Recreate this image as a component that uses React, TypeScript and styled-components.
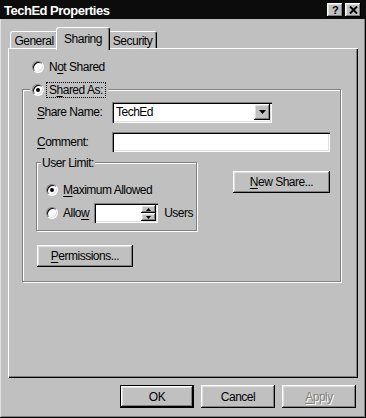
import React from 'react';
import styled, { createGlobalStyle, css } from 'styled-components';

const GlobalStyle = createGlobalStyle`
  html, body {
    margin: 0;
    padding: 0;
    background: #c0c0c0;
  }
  body {
    font-family: "Liberation Sans", Arial, sans-serif;
  }
`;

const face = '#c0c0c0';

const raised = css`
  box-shadow: inset -1px -1px 0 #000, inset 1px 1px 0 #fff,
    inset -2px -2px 0 #808080, inset 2px 2px 0 #dfdfdf;
`;

const sunken = css`
  box-shadow: inset 1px 1px 0 #808080, inset 2px 2px 0 #000,
    inset -1px -1px 0 #fff, inset -2px -2px 0 #dfdfdf;
`;

const etched = css`
  box-sizing: border-box;
  border: 1px solid #808080;
  box-shadow: 1px 1px 0 #fff, inset 1px 1px 0 #fff;
`;

const Window = styled.div`
  width: 366px;
  height: 418px;
  box-sizing: border-box;
  display: flex;
  flex-direction: column;
  background: ${face};
  color: #000;
  font-size: 12px;
  letter-spacing: -0.5px;
  box-shadow: inset -1px -1px 0 #000, inset 1px 0 0 #dfdfdf,
    inset -2px -2px 0 #808080;
`;

const TitleBar = styled.div`
  height: 19px;
  flex: none;
  display: flex;
  align-items: center;
  gap: 2px;
  padding: 0 5px 0 4px;
  background: #0c0c0c;
  color: #fff;
  font-weight: bold;
  font-size: 13px;
  letter-spacing: -0.5px;
`;

const TitleText = styled.div`
  flex: 1;
  padding-top: 1px;
`;

const CaptionButton = styled.div`
  width: 16px;
  height: 14px;
  box-sizing: border-box;
  display: flex;
  align-items: center;
  justify-content: center;
  background: ${face};
  color: #000;
  font-size: 11px;
  font-weight: bold;
  ${raised}
`;

const TabRow = styled.div`
  height: 21px;
  margin-top: 8px;
  padding-left: 10px;
  display: flex;
  align-items: flex-end;
`;

const Tab = styled.div<{ $active?: boolean; $w: number }>`
  width: ${p => p.$w}px;
  height: ${p => (p.$active ? 23 : 17)}px;
  box-sizing: border-box;
  display: flex;
  justify-content: center;
  padding-top: ${p => (p.$active ? 4 : 2)}px;
  background: ${face};
  border-top: 1px solid #fff;
  border-left: 1px solid #fff;
  border-right: 1px solid #000;
  border-radius: 3px 3px 0 0;
  box-shadow: inset -1px 0 0 #808080;
  ${p =>
    p.$active &&
    css`
      margin: 0 -2px -2px;
      position: relative;
      z-index: 1;
    `}
`;

const Panel = styled.div`
  margin-left: 8px;
  width: 350px;
  height: 330px;
  box-sizing: border-box;
  display: flex;
  flex-direction: column;
  align-items: flex-start;
  box-shadow: inset 1px 1px 0 #fff, inset -1px -1px 0 #000,
    inset -2px -2px 0 #808080;
`;

const RadioRow = styled.div<{ $top?: number; $left?: number; $h?: number }>`
  height: ${p => p.$h ?? 16}px;
  display: flex;
  align-items: center;
  margin-top: ${p => p.$top ?? 0}px;
  margin-left: ${p => p.$left ?? 0}px;
`;

const Radio = styled.span<{ $checked?: boolean }>`
  width: 12px;
  height: 12px;
  flex: none;
  box-sizing: border-box;
  border-radius: 50%;
  background: #fff;
  border: 1px solid;
  border-color: #808080 #fff #fff #808080;
  box-shadow: inset 1px 1px 0 #000, inset -1px -1px 0 #dfdfdf;
  display: flex;
  align-items: center;
  justify-content: center;
  margin-right: 5px;

  &::after {
    content: '';
    width: 4px;
    height: 4px;
    border-radius: 50%;
    background: #000;
    display: ${p => (p.$checked ? 'block' : 'none')};
  }
`;

const Key = styled.span`
  text-decoration: underline;
  text-underline-offset: 2px;
`;

const GroupBox = styled.div<{ $w: number; $h: number; $top: number; $left: number }>`
  ${etched}
  width: ${p => p.$w}px;
  height: ${p => p.$h}px;
  margin-top: ${p => p.$top}px;
  margin-left: ${p => p.$left}px;
  flex: none;
  display: flex;
  flex-direction: column;
  align-items: flex-start;
`;

const SharedLegend = styled.div`
  height: 16px;
  margin: -8px 0 0 7px;
  padding: 0 2px;
  display: flex;
  align-items: center;
  background: ${face};
`;

const FocusLabel = styled.span`
  height: 16px;
  box-sizing: border-box;
  display: flex;
  align-items: center;
  padding: 0 2px;
  margin-left: -3px;
  border: 1px dotted #000;
`;

const LimitLegend = styled.div`
  height: 14px;
  line-height: 14px;
  margin: -7px 0 0 4px;
  padding: 0 1px;
  background: ${face};
`;

const FieldRow = styled.div<{ $top: number }>`
  height: 20px;
  display: flex;
  align-items: center;
  margin: ${p => p.$top}px 0 0 14px;
`;

const FieldLabel = styled.span`
  width: 75px;
`;

const TextBox = styled.div<{ $w: number; $h?: number }>`
  width: ${p => p.$w}px;
  height: ${p => p.$h ?? 20}px;
  box-sizing: border-box;
  display: flex;
  align-items: center;
  padding: 0 2px 0 4px;
  background: #fff;
  ${sunken}
`;

const SelectText = styled.span`
  flex: 1;
`;

const DropButton = styled.div`
  width: 16px;
  height: 16px;
  box-sizing: border-box;
  display: flex;
  align-items: center;
  justify-content: center;
  background: ${face};
  ${raised}
`;

const LimitRow = styled.div`
  display: flex;
  align-items: flex-start;
  margin: 10px 0 0 13px;
`;

const SpinBox = styled(TextBox)`
  margin-left: 5px;
  padding-right: 2px;
  justify-content: flex-end;
`;

const SpinButtons = styled.div`
  display: flex;
  flex-direction: column;
`;

const SpinButton = styled.div`
  width: 15px;
  height: 8px;
  box-sizing: border-box;
  display: flex;
  align-items: center;
  justify-content: center;
  background: ${face};
  ${raised}
`;

const UsersText = styled.span`
  margin-left: 6px;
`;

const Button = styled.div<{ $w: number; $default?: boolean; $disabled?: boolean }>`
  width: ${p => p.$w}px;
  height: ${p => (p.$default ? 23 : 22)}px;
  box-sizing: border-box;
  flex: none;
  display: flex;
  align-items: center;
  justify-content: center;
  background: ${face};
  ${raised}
  ${p =>
    p.$default &&
    css`
      border: 1px solid #000;
    `}
  ${p =>
    p.$disabled &&
    css`
      color: #808080;
      text-shadow: 1px 1px 0 #fff;
    `}
`;

const NewShareButton = styled(Button)`
  margin: 9px 0 0 36px;
`;

const PermissionsButton = styled(Button)`
  margin: 14px 0 0 14px;
`;

const Footer = styled.div`
  display: flex;
  justify-content: flex-end;
  gap: 7px;
  margin-top: 7px;
  padding-right: 10px;
`;

const FooterButton = styled(Button)`
  height: 23px;
`;

const Down = ({ w = 7, h = 4 }: { w?: number; h?: number }) => (
  <svg width={w} height={h} viewBox={`0 0 ${w} ${h}`}>
    <polygon points={`0,0 ${w},0 ${w / 2},${h}`} fill="#000" />
  </svg>
);

const Up = ({ w = 5, h = 3 }: { w?: number; h?: number }) => (
  <svg width={w} height={h} viewBox={`0 0 ${w} ${h}`}>
    <polygon points={`0,${h} ${w},${h} ${w / 2},0`} fill="#000" />
  </svg>
);

const CloseGlyph = () => (
  <svg width="9" height="8" viewBox="0 0 9 8">
    <path d="M1 0.5 L8 7.5 M8 0.5 L1 7.5" stroke="#000" strokeWidth="2" />
  </svg>
);

export default function App() {
  return (
    <>
      <GlobalStyle />
      <Window>
        <TitleBar>
          <TitleText>TechEd Properties</TitleText>
          <CaptionButton>?</CaptionButton>
          <CaptionButton>
            <CloseGlyph />
          </CaptionButton>
        </TitleBar>

        <TabRow>
          <Tab $w={48}>General</Tab>
          <Tab $w={54} $active>
            Sharing
          </Tab>
          <Tab $w={49}>Security</Tab>
        </TabRow>

        <Panel>
          <RadioRow $top={11} $left={24}>
            <Radio />
            <span>
              N<Key>o</Key>t Shared
            </span>
          </RadioRow>

          <GroupBox $w={319} $h={193} $top={14} $left={14}>
            <SharedLegend>
              <Radio $checked />
              <FocusLabel>
                S<Key>h</Key>ared As:
              </FocusLabel>
            </SharedLegend>

            <FieldRow $top={4}>
              <FieldLabel>
                <Key>S</Key>hare Name:
              </FieldLabel>
              <TextBox $w={160} $h={21}>
                <SelectText>TechEd</SelectText>
                <DropButton>
                  <Down />
                </DropButton>
              </TextBox>
            </FieldRow>

            <FieldRow $top={10}>
              <FieldLabel>
                <Key>C</Key>omment:
              </FieldLabel>
              <TextBox $w={218} />
            </FieldRow>

            <LimitRow>
              <GroupBox $w={161} $h={69} $top={0} $left={0}>
                <LimitLegend>User Limit:</LimitLegend>
                <RadioRow $top={12} $left={9}>
                  <Radio $checked />
                  <span>
                    <Key>M</Key>aximum Allowed
                  </span>
                </RadioRow>
                <RadioRow $top={5} $left={9} $h={20}>
                  <Radio />
                  <span>
                    Allo<Key>w</Key>
                  </span>
                  <SpinBox $w={64}>
                    <SpinButtons>
                      <SpinButton>
                        <Up />
                      </SpinButton>
                      <SpinButton>
                        <Down w={5} h={3} />
                      </SpinButton>
                    </SpinButtons>
                  </SpinBox>
                  <UsersText>Users</UsersText>
                </RadioRow>
              </GroupBox>

              <NewShareButton $w={97}>
                <span>
                  <Key>N</Key>ew Share...
                </span>
              </NewShareButton>
            </LimitRow>

            <PermissionsButton $w={96}>
              <span>
                <Key>P</Key>ermissions...
              </span>
            </PermissionsButton>
          </GroupBox>
        </Panel>

        <Footer>
          <FooterButton $w={74} $default>
            OK
          </FooterButton>
          <FooterButton $w={74}>Cancel</FooterButton>
          <FooterButton $w={74} $disabled>
            <span>
              <Key>A</Key>pply
            </span>
          </FooterButton>
        </Footer>
      </Window>
    </>
  );
}
